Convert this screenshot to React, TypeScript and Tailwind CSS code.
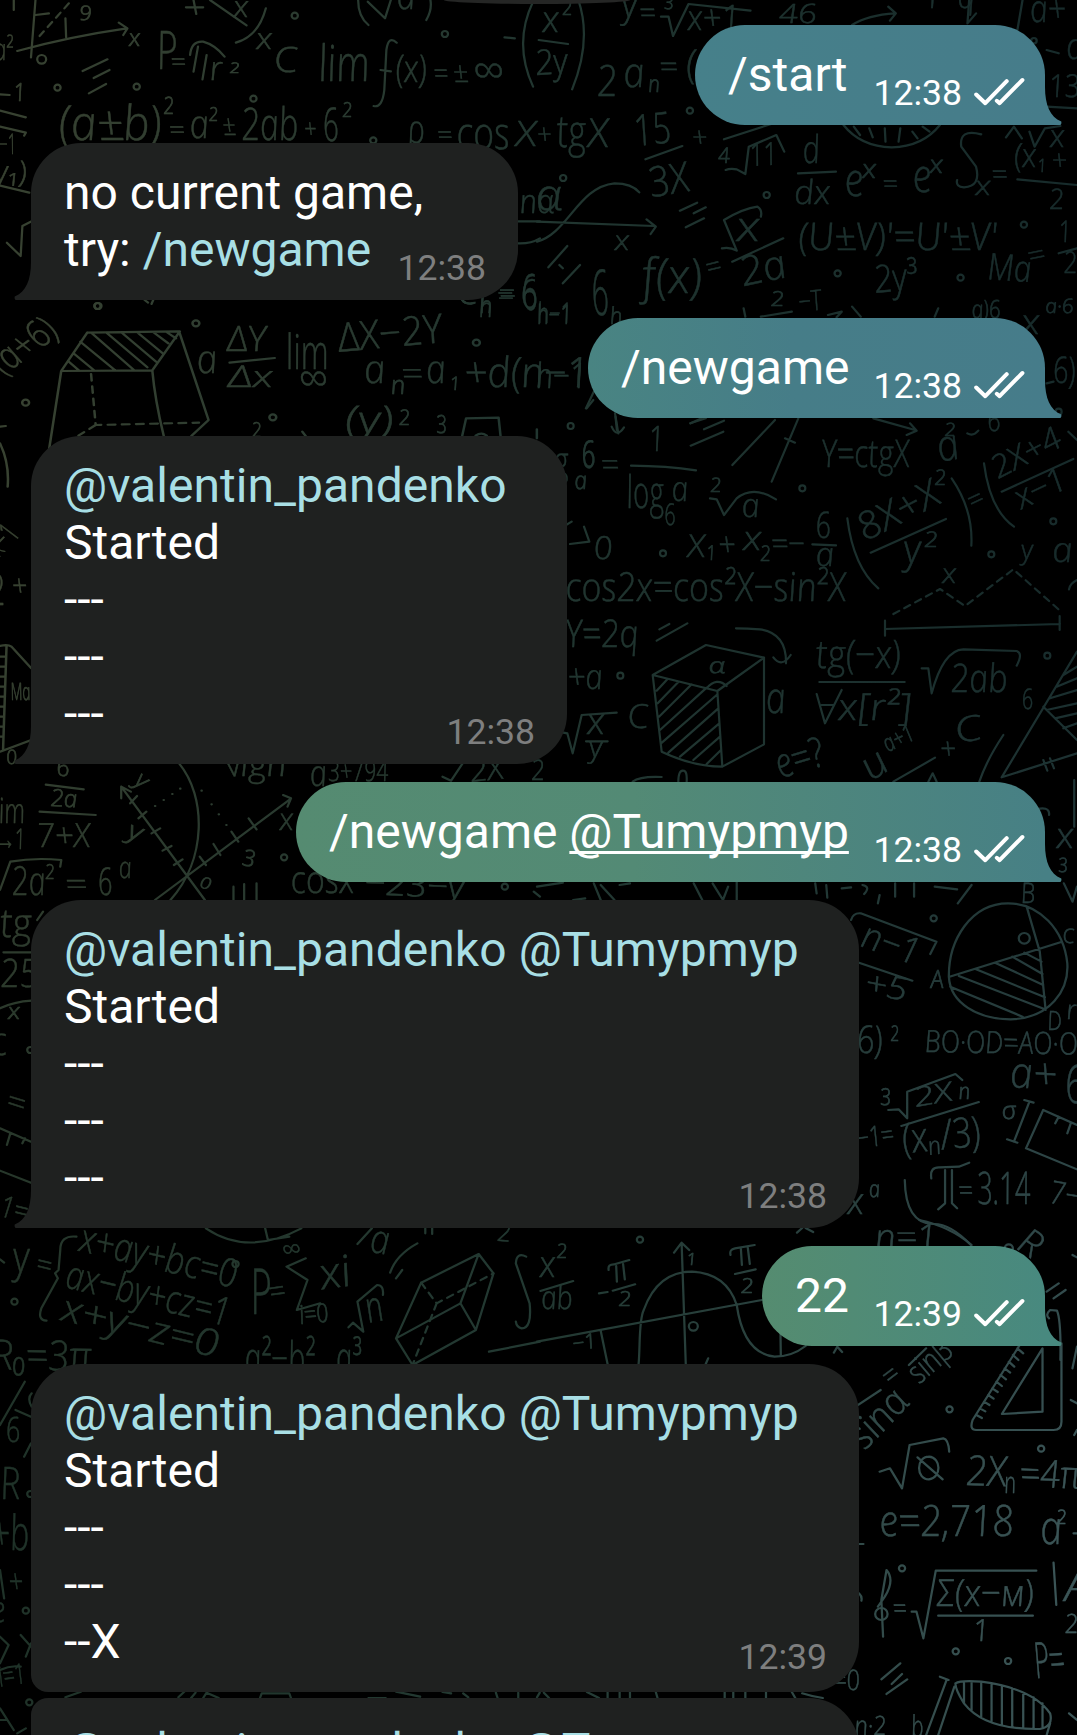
import React from "react";

/* A handwritten label: text, x, baseline y, size, width, rotation. */
type Label = [string, number, number, number, number, number?];

type Region = {
  transform: string;
  labels: Label[];
  strokes: string;
  dashes?: string;
  dots?: [number, number, number?][];
};

const regions: Region[] = [
  {
    transform: "scale(0.34436 0.33333)",
    labels: [
      ["9", 232, 60, 60, 36], ["x", 376, 138, 72, 34], ["a²", -14, 180, 90, 56],
      ["P", 460, 208, 160, 60], ["=", 498, 212, 80, 44], ["r", 612, 240, 100, 38], ["2", 668, 220, 44, 30],
      ["x", 746, 148, 90, 48], ["C", 798, 215, 105, 70], ["lim", 930, 242, 150, 148], ["(x)", 1152, 245, 115, 92],
      ["=", 1262, 248, 85, 42], ["±", 1318, 245, 85, 44], ["∞", 1378, 262, 140, 90], ["x", 680, 50, 90, 45],
      ["a", 1155, 28, 120, 55], ["1", 42, 303, 75, 34], ["−1", 0, 462, 85, 50], ["y₁)", -14, 545, 90, 96],
      ["(a±b)", 175, 420, 145, 300], ["2", 476, 342, 72, 32], ["=", 493, 418, 80, 46], ["a", 555, 415, 120, 56],
      ["2", 608, 362, 58, 28], ["±", 648, 405, 85, 38], ["2ab", 705, 420, 135, 166], ["+", 886, 415, 80, 36],
      ["6", 942, 422, 140, 46], ["2", 995, 352, 62, 30], ["ρ", 1188, 428, 120, 50], ["=", 1272, 432, 80, 44],
      ["cos", 1330, 448, 135, 155], ["X", 1500, 438, 105, 62], ["nα", 1512, 640, 100, 100], ["=", 1446, 915, 80, 48],
      ["6", 1520, 930, 150, 46], ["h", 1395, 940, 70, 36], ["C", 1330, 912, 100, 60],
    ],
    strokes:
      "M552 165Q556 122 590 125Q625 135 652 170M575 140L562 215M600 165L588 238M1152 128Q1128 105 1122 150L1116 270Q1110 325 1085 318M1105 210L1135 214M1465 112L1495 115M1548 5Q1490 130 1548 260M240 213L312 178M272 234L318 210M258 280L308 252M103 0L90 172M50 153Q200 110 368 85M345 68L370 85L358 105M103 45L142 40M190 55L192 112M40 0V30M540 22H590M562 0L570 42M610 0L716 76M772 25Q750 110 685 128M1040 0Q1040 50 1070 75M1068 5L1118 55L1135 0M1250 0Q1255 30 1238 60M0 283L28 285M0 332L75 352M0 380L75 398L70 407M0 557L85 578M20 728L60 768L65 678L92 664M1503 664H1568M1503 730Q1540 732 1568 715M420 900L430 908M445 900L440 912",
    dashes: "M200 10L115 108",
    dots: [[856, 47], [1292, 102], [167, 263], [397, 260], [736, 296], [1084, 421], [283, 918], [121, 178, 13]],
  },
  {
    transform: "translate(537 0) scale(0.34436 0.33333)",
    labels: [
      ["x", 18, 95, 110, 50], ["2", 75, 45, 65, 30], ["2y", 0, 225, 105, 95, -4], ["y", 250, 50, 110, 45],
      ["=", 300, 68, 90, 48], ["3", 370, 28, 55, 28], ["x+1", 440, 90, 105, 152], ["46", 705, 70, 80, 110],
      ["1−q", 1125, 25, 95, 150], ["a+", 1435, 65, 115, 105], ["a", 1540, 178, 110, 55], ["13", 1490, 290, 95, 90],
      ["2", 178, 288, 130, 60], ["a", 255, 262, 125, 62], ["n", 325, 275, 70, 34], ["=", 358, 232, 90, 54],
      ["(", 436, 235, 120, 30], ["+", 3, 432, 85, 42], ["tg", 62, 440, 135, 85], ["X", 150, 442, 120, 62],
      ["15", 290, 438, 130, 108, -6], ["3X", 335, 592, 125, 118, -10], ["+", 453, 442, 85, 44], ["4", 528, 490, 65, 34],
      ["11", 622, 498, 95, 80, -3], ["d", 775, 490, 116, 50], ["dx", 750, 612, 100, 105], ["e", 897, 588, 140, 56],
      ["x", 946, 535, 78, 42], ["=", 1006, 580, 80, 44], ["e", 1095, 577, 140, 56], ["x", 1142, 520, 75, 40],
      ["x", 1275, 584, 80, 46], ["=", 1323, 552, 85, 46], ["(x", 1388, 500, 100, 66], ["1", 1456, 516, 55, 24],
      ["+", 1498, 510, 85, 44], ["2", 1490, 628, 85, 44], ["x", 1492, 440, 95, 44], ["α", 0, 630, 130, 78],
      ["x", 227, 750, 82, 44], ["x", 582, 724, 125, 70], ["2a", 602, 858, 122, 135, -12], ["(U±V)'=U'±V'", 762, 750, 115, 580],
      ["1", 1518, 725, 90, 36], ["2", 1532, 820, 90, 40], ["6", 165, 945, 190, 50], ["h", 214, 972, 70, 36],
      ["h−1", 4, 968, 85, 100], ["f(x)", 310, 880, 145, 175], ["=", 500, 832, 85, 44, -14], ["2y³", 985, 878, 115, 128, -5],
      ["Ma", 1310, 838, 110, 128, 4], ["=", 1434, 798, 85, 50, -12], ["2", 680, 918, 62, 40], ["−T", 765, 935, 85, 68, -6],
      ["a)6", 1265, 955, 75, 84], ["x", 1410, 1002, 105, 54], ["a·6", 1478, 940, 60, 82], ["h−1", 0, 1165, 105, 148],
      ["6)", 1502, 1150, 110, 66],
    ],
    strokes:
      "M5 120L90 132M120 0Q160 120 102 268M360 50L382 50L395 108L440 12L620 32M915 75Q960 45 1040 40M1020 20L1042 40L1025 62M1255 0L1250 70L1275 40M1410 0L1395 90M1480 150L1515 160M1480 320L1568 325M315 478L422 438M543 418L680 372M548 510Q560 505 580 508L605 522L615 440L695 405L718 455M890 375Q940 440 1030 442Q1120 440 1170 375M920 380L938 405M965 385L975 412M1010 385L1012 425M1055 385L1050 425M1090 395L1105 415M1120 380L1140 395M758 520L868 515M1290 403Q1225 385 1232 440L1275 500Q1290 560 1240 562Q1215 560 1220 540M1395 538L1568 555M1362 412L1385 380L1408 415M1430 395L1445 440L1475 385L1520 378M0 725C90 700 120 560 225 550Q275 550 297 577M0 665L340 678M318 658L345 680L330 702M415 632L465 608M455 640L490 622M432 682L485 655M537 745Q560 740 580 752L543 660Q600 625 640 620Q655 630 650 650M567 785L715 715M1515 760L1568 745M33 802L88 738M65 795L75 805M75 850L125 795M650 950L740 935M600 925L605 950M845 945L885 935L870 952M915 920L940 950M1165 925L1155 950M165 1175L142 1225M1480 1150L1500 1145M228 1250L232 1290M445 1270L490 1255",
    dots: [[1443, 122, 8], [444, 332], [667, 585], [76, 534], [1414, 674], [873, 820], [1230, 833]],
  },
  {
    transform: "translate(0 290) scale(0.38265 0.33333)",
    labels: [
      ["(a+6)", 12, 255, 110, 195, -40], ["a", 518, 250, 120, 54], ["ΔY", 595, 182, 105, 105], ["Δx", 597, 290, 90, 120],
      ["lim", 752, 238, 145, 112], ["∞", 785, 316, 140, 76], ["ΔX−2Y", 890, 185, 120, 275, -6], ["a", 955, 278, 120, 56],
      ["n", 1024, 312, 78, 38], ["=", 1052, 284, 100, 56], ["a", 1117, 278, 120, 52], ["1", 1178, 300, 56, 26],
      ["+d(n−1", 1218, 290, 125, 325], ["C", 1198, 42, 90, 50], ["h", 1254, 80, 80, 36], ["=", 1306, 38, 85, 44],
      ["6", 1365, 55, 120, 44], ["h−1", 1406, 102, 80, 90], ["2", 660, 442, 62, 26], ["(y)", 905, 430, 115, 128],
      ["2", 1044, 406, 65, 30], ["3", 1142, 428, 75, 28], ["x−1", 0, 800, 85, 90, -50], ["2", -26, 945, 130, 44],
      ["+", 34, 918, 90, 40], ["Ma", 30, 1230, 72, 52], ["0", 18, 1422, 60, 28], ["6", 1524, 530, 110, 36],
    ],
    strokes:
      "M228 128L468 124L545 390L500 438M228 128L160 243L128 480M160 243L398 241L470 124M398 241Q405 330 428 438M180 215L205 240M192 190L245 240M210 155L300 240M240 130L350 240M280 130L385 232M320 130L408 215M360 128L425 190M400 126L440 160M435 126L460 145M600 218L718 204M1208 437L1218 385L1303 383L1308 437M1243 437Q1258 425 1272 437M1403 418V445M790 425L800 440M0 460Q25 520 20 590M0 410L15 408M0 1068Q20 1062 30 1070L82 1135M17 1070L8 1380M0 1385L82 1350M0 1100H16M0 1130H15M0 1160H14M0 1190H13M0 1220H13M0 1250H12M0 1280H11M0 1310H10M0 1340H9",
    dashes: "M238 252L250 405L520 398M250 405L205 437",
    dots: [[512, 100], [256, 48], [67, 338], [1245, 158], [713, 382]],
  },
  {
    transform: "translate(560 400) scale(0.33333)",
    labels: [
      ["1", 270, 152, 105, 46], ["log", 204, 325, 135, 112], ["6", 316, 376, 90, 34], ["a", 338, 302, 105, 50],
      ["g", -14, 225, 120, 44], ["6", 68, 205, 115, 40], ["=", 126, 227, 100, 54], ["a", 46, 268, 75, 38],
      ["2", 452, 277, 60, 34], ["a", 548, 350, 100, 54], ["Y=ctgX", 788, 200, 115, 264], ["a", 1142, 185, 130, 66, -10],
      ["2", 1155, 108, 55, 34], ["6", 1285, 92, 90, 40], ["2X+4", 1316, 236, 95, 222, -27], ["x−1", 1385, 328, 100, 160, -25],
      ["=", 1240, 332, 85, 46, -25], ["8X+X", 918, 424, 115, 262, -27], ["2", 1125, 255, 65, 36], ["y", 1035, 490, 120, 52],
      ["2", 1094, 442, 65, 42], ["0", 104, 478, 95, 56], ["X", 385, 470, 95, 54], ["1", 442, 480, 62, 28],
      ["+", 478, 468, 100, 52], ["X", 553, 450, 75, 50], ["2", 602, 484, 65, 32], ["=−", 636, 462, 90, 102],
      ["6", 770, 414, 110, 46], ["a", 770, 498, 100, 56], ["cos2x=cos²X−sin²X", 20, 604, 120, 842], ["Y=2q", 20, 742, 115, 220],
      ["α", 448, 818, 65, 50], ["a", 622, 940, 130, 60], ["tg(−x)", 772, 805, 118, 255], ["x[r²]", 838, 960, 112, 222],
      ["2ab", 1175, 875, 118, 172], ["+a", 26, 868, 105, 106], ["C", 205, 985, 100, 64], ["x", 84, 1002, 110, 54],
      ["y", 90, 1072, 85, 40], ["e=?", 664, 1135, 125, 148, -17], ["u", 936, 1142, 120, 72, -32], ["a+1", 985, 1056, 72, 94, -25],
      ["+", 1143, 1078, 90, 48], ["C", 1192, 1028, 105, 82, -8], ["x", 1148, 550, 82, 44], ["y", 1386, 478, 80, 36],
      ["a", 1480, 485, 105, 62], ["6", 1388, 926, 85, 34],
    ],
    strokes:
      "M165 40L175 100M155 80Q170 115 192 82M80 25L100 0M213 197Q320 198 408 211M392 70L425 55M432 88L492 62M392 137L490 95M645 60L517 195M715 55L635 245M675 115L705 128M450 295L470 298L492 345L530 295Q580 255 648 298M940 55L1065 90M1050 70L1070 92L1040 105M1222 100Q1240 110 1255 92M1325 275L1540 177M1272 190Q1290 330 1362 380M932 458L1158 357M862 355Q880 500 955 565M1175 235Q1240 330 1234 437M30 432L88 425L72 380M18 375L35 365M757 433L828 436M298 688L328 672M290 722L382 670M528 685Q560 685 600 688Q680 700 678 790M640 772Q665 805 692 765M278 825L438 735L612 773V1033L487 1100Q400 1100 305 1055ZM278 825L472 873L612 773M472 873L487 1100M290 872L322 838M293 910L355 846M297 950L395 853M300 990L440 863M303 1030L470 885M325 1058L475 925M360 1070L478 970M400 1080L480 1010M440 1092L483 1050M440 865Q470 830 500 858M778 846H1034M770 882L795 970L845 870M785 915H822M1085 805H1105L1115 880Q1150 750 1210 748L1370 753Q1390 760 1370 797M10 998L22 1000L38 1060L65 945L170 938M78 1024H143M1000 1145L1125 1073M1105 1145L1118 1120L1130 1145M1330 1005Q1280 1080 1258 1145M975 662V707M975 687L1500 672M1499 648V690M1551 755L1325 1132L1551 1060M1450 920L1551 1020M1510 825L1551 800M1490 860L1551 835M1470 895L1551 870M1460 930L1551 910M1485 955L1551 940M1510 985L1551 970M1450 1080L1462 1112M1470 1075L1482 1105M1525 95L1551 120M1551 540Q1530 550 1527 568M218 1145Q240 1128 305 1131M355 1145Q355 1110 370 1112Q382 1112 380 1145",
    dashes: "M1000 642L1140 567L1215 618L1360 508L1500 632",
    dots: [[32, 78], [309, 460], [727, 265], [1294, 463], [1480, 364], [1462, 767], [181, 827], [1496, 35]],
  },
  {
    transform: "translate(0 760) scale(0.34436 0.33333)",
    labels: [
      ["6", 166, 48, 75, 38], ["2a", 148, 138, 72, 78, 3], ["7+X", 110, 262, 100, 155], ["im", 0, 188, 105, 76],
      ["→1", -10, 268, 85, 86], ["2a", 38, 405, 120, 98], ["2", 133, 356, 62, 28], ["=", 192, 405, 95, 64],
      ["6", 288, 404, 115, 42], ["a", 348, 355, 90, 38], ["y", 388, 70, 70, 32, 40], ["y", 368, 232, 75, 42, 20],
      ["x", 814, 210, 92, 42], ["3", 702, 315, 68, 38, 10], ["0", 578, 380, 48, 32, 20], ["√lgn", 650, 48, 100, 185],
      ["a", 903, 78, 110, 50], ["3+794", 955, 62, 85, 175], ["2X", 1370, 65, 90, 98, -6], ["2", 1545, 60, 85, 40],
      ["cosx", 848, 400, 115, 185], ["−23−y", 1060, 402, 100, 290, 3], ["tg", 4, 532, 120, 92], ["25", 4, 680, 118, 112],
      ["x", 25, 776, 68, 36], ["c", -20, 885, 120, 44], ["=", 14, 1050, 95, 56, 18], ["1=", -2, 1368, 90, 82, 14],
    ],
    strokes:
      "M133 74L243 88M115 155L278 165M0 390L30 305Q100 292 178 300L175 320M595 420L352 80M352 115L352 80L380 95M450 420L842 118M822 105L845 115L835 140M520 10C600 110 600 300 495 420M378 130L398 108M402 175L425 155M440 220L465 205M472 272L498 258M505 315L530 298M580 290L598 315M620 252L640 285M672 215L692 245M722 175L745 208M1285 50L1310 62L1350 0M678 380V420M709 372V420M745 370V420M10 577H90M0 745Q40 725 92 722M108 480L125 455M0 1105L90 1145M20 1155L30 1120M65 1150L72 1135M0 1232L90 1268M1550 395L1568 410M450 138H451M475 120H476M500 102H501M523 86H524M585 92H586M614 133H615M635 163H636M657 195H658",
    dots: [[825, 292], [1466, 380], [88, 870]],
  },
  {
    transform: "translate(537 770) scale(0.34436 0.33333)",
    labels: [
      ["B", 1408, 400, 85, 42], ["x", 1511, 235, 108, 52], ["3", 1515, 305, 60, 28], ["n−1", 938, 528, 110, 172, 20],
      ["+5", 950, 668, 95, 125, 12], ["A", 1145, 655, 75, 38], ["C", 1528, 518, 60, 34],
      ["D", 1485, 780, 80, 42], ["r", 1540, 748, 80, 30], ["6)", 932, 848, 115, 76], ["2", 1028, 812, 65, 26],
      ["BO·OD=AO·O", 1128, 846, 92, 445, 1], ["a+", 1376, 952, 130, 136, 3], ["6", 1538, 1000, 160, 60], ["3", 998, 1005, 70, 32],
      ["2X", 1102, 1010, 80, 112, -10], ["n", 1226, 988, 68, 34], ["−1=", 935, 1135, 85, 108, -8], ["(xₙ/3)", 1068, 1150, 125, 230, -6],
      ["σ", 1352, 1048, 75, 42], ["=", 1226, 1290, 85, 42], ["3.14", 1282, 1302, 135, 155], ["7−", 1488, 1298, 95, 90, 10],
      ["x", 903, 1332, 112, 50], ["a", 966, 1280, 70, 32],
    ],
    strokes:
      "M0 350L75 338M105 390L140 385M165 340L185 390M185 345L225 390M240 345L270 340M455 340L480 390M510 340L540 390L555 350M580 336V390M808 340L812 370M840 345L843 383M885 355L912 352M945 345Q970 350 950 372M995 375L990 400M1040 340V380M1095 340V380M1155 350L1220 358M1262 345L1222 400M1530 340L1555 395L1568 350M1560 30V170M1440 120Q1490 105 1487 135M912 450Q918 428 940 430L1160 515L1142 552M935 578L1090 632M1368 400C1260 400 1195 510 1196 620C1200 700 1280 747 1375 748C1490 745 1545 660 1540 580C1530 480 1460 400 1368 400M1198 620L1520 517M1422 410L1460 545L1477 720M1200 650L1410 740M1225 618L1475 718M1275 598L1475 682M1330 578L1470 645M1380 560L1468 612M1415 548L1465 575M1020 1020L1050 1018L1075 1045V965L1215 912L1235 930M1058 1068L1283 996M1415 990L1442 998M1430 995L1385 1115M1365 1108L1395 1118M1568 1065L1470 1020L1420 1135L1568 1198M1515 1040L1505 1060M1550 1060L1540 1090M1145 1225Q1140 1190 1170 1192L1225 1190L1255 1178M1185 1200V1300L1165 1318M1205 1200V1300L1220 1315M1068 1230Q1070 1360 1150 1362Q1200 1360 1260 1425M755 1388L770 1374M780 1374L802 1386",
    dots: [[1152, 445], [1415, 505, 16]],
  },
  {
    transform: "translate(0 1220) scale(0.34436 0.33333)",
    labels: [
      ["y", 42, 155, 130, 48], ["=", 102, 160, 90, 46, 14], ["x+ay+bc=0", 228, 92, 118, 468, 14], ["ax−by+cz=1", 188, 202, 118, 488, 14],
      ["x+y−z=0", 175, 300, 112, 468, 14], ["R₀=3π", -22, 448, 125, 292, 1], ["P", 733, 282, 190, 62], ["=", 788, 248, 95, 48, -8],
      ["∞", 826, 120, 85, 54, -8], ["xi", 938, 208, 130, 92, -8], ["i=0", 874, 312, 78, 84, -5], ["a", 1074, 95, 120, 56, 10],
      ["n", 1073, 308, 130, 50, -10], ["2", 1445, 62, 80, 40, 5], ["a²−b²", 715, 462, 135, 205], ["a³", 980, 458, 130, 75],
      ["6", 20, 665, 105, 42], ["R", 5, 838, 135, 58], ["+b", -22, 990, 145, 112], ["+", 28, 1118, 100, 42],
      ["e", -24, 1205, 110, 44], ["i=1", 2, 1400, 85, 78, -8],
    ],
    strokes:
      "M598 25Q720 110 875 25M770 25L778 60L840 50M222 50Q175 45 175 90L170 150L160 160L168 175L120 265Q108 300 135 302M0 118L12 128M888 115L832 140L893 180L862 270L930 250M1038 72L1080 25M1212 70Q1150 105 1133 158M1150 175L1168 150M1012 322L1025 308L1055 335L1038 245L1095 195Q1115 195 1112 225M1223 188L1390 102L1433 160L1382 330L1198 435L1150 355ZM1390 102L1337 250L1382 330M1337 250L1150 355M1528 110Q1500 95 1498 130L1538 250Q1545 325 1515 325Q1500 322 1498 305M1420 395L1568 365M1235 25V40M1255 25V42M72 485L0 615M45 570L90 590M92 520Q78 535 92 560M70 710L90 670M0 1050L12 1135M0 1250L25 1275L0 1330M60 1245L90 1280M90 1270L75 1310M0 1350Q30 1335 60 1340M0 1465L40 1530M50 1540L75 1525M0 1500L20 1500M190 1432L235 1415M518 1432L535 1415M555 1434L568 1418M590 1434L600 1418L635 1434M755 1434L760 1420H840L845 1434M1070 1434H1120M1150 1415L1220 1430M1285 1416L1310 1420M1345 1420L1360 1432M1440 1418L1445 1434M1505 1418V1434",
    dashes: "M1223 188L1268 250L1433 160M1268 250L1198 435",
    dots: [[684, 132], [42, 245], [88, 822], [75, 1172], [85, 1447]],
  },
  {
    transform: "translate(537 1220) scale(0.34436 0.33333)",
    labels: [
      ["x", 10, 172, 112, 48], ["2", 58, 115, 60, 32], ["ab", 15, 268, 98, 92], ["2", 238, 258, 62, 38],
      ["2", 593, 218, 62, 38], ["1", 436, 135, 50, 28], ["−1", 108, 392, 62, 68, -8], ["R", 1390, 85, 110, 62, 35],
      ["n=1", 985, 88, 105, 180], ["sinα", 955, 690, 115, 195, -47], ["=", 1030, 500, 90, 44, -38], ["sinβ", 1112, 492, 95, 140, -42],
      ["2X", 1248, 795, 125, 120, 2], ["n", 1360, 820, 90, 34], ["=4π", 1404, 800, 115, 178, 2], ["e=2,718", 998, 948, 130, 390],
      ["a", 1466, 972, 140, 64], ["2", 1510, 912, 60, 30], ["=", 1036, 1195, 85, 40], ["Σ(x−м)", 1162, 1158, 112, 285],
      ["1", 1270, 1262, 92, 46], ["A", 1534, 1142, 130, 80], ["P=", 1452, 1375, 150, 88, -4], ["=0", 862, 1410, 85, 78],
      ["n·2", 925, 1545, 80, 92], ["b", 1090, 1550, 90, 36], ["2", 1535, 1240, 80, 40],
    ],
    strokes:
      "M10 213L105 183M180 220L205 216M208 150Q205 132 225 133L268 120M230 138L232 185M250 132L255 178M220 212L285 193M562 105Q558 88 575 85L632 75M592 85L595 135M612 82L618 132M575 162L635 148M432 432L420 70M398 98L420 68L442 90M0 365L653 240M295 432C300 380 295 300 310 270Q350 155 450 155Q550 160 580 255Q600 400 690 410Q740 410 780 378M185 332L205 432M707 340L708 405M490 432L497 415M862 398L872 380L886 396M1110 0Q1200 20 1262 75M1480 215L1515 190M1500 235L1535 210M1555 105L1568 112M1487 295Q1475 285 1490 270L1510 272Q1522 300 1520 420M1400 378L1265 600Q1255 630 1275 630H1500Q1523 630 1523 605V370M1468 385V575L1350 582ZM1395 385L1412 400M1382 405L1398 420M1370 425L1386 440M1358 445L1374 458M1346 465L1362 478M1334 485L1350 498M1322 505L1338 516M1310 525L1326 536M1298 545L1314 555M1286 565L1302 574M1276 585L1292 594M1568 380L1555 445M1550 540L1568 550M1568 630L1560 645M1080 435L1130 385M925 560L998 510M995 755L1025 745L1060 805L1082 675L1180 655Q1195 658 1197 695M1138 710C1100 710 1100 778 1138 778C1175 775 1175 712 1138 710M1105 712L1178 778M935 972H948M935 1120Q945 1130 942 1142M1558 940H1568M1005 1250L1000 1140L1015 1050Q1040 1080 1010 1130L990 1160M1088 1175H1102L1122 1255L1158 1052H1450M1165 1187H1440M1500 1028L1508 1155M1000 1378L1055 1330M1015 1422L1075 1378M1030 1392L1060 1362M1215 1390Q1230 1380 1290 1385Q1440 1405 1490 1480Q1500 1520 1460 1527Q1300 1530 1240 1450Q1215 1410 1215 1390M1170 1370L1195 1380M1190 1378L1130 1545M1212 1400L1165 1545M1490 1510L1480 1545M1545 1480L1568 1500M1240 1390V1448M1262 1388V1470M1290 1390V1490M1320 1392V1505M1350 1398V1515M1380 1405V1522M1412 1418V1525M1442 1432V1525M1468 1450V1520M0 1432L8 1418M20 1418L35 1434M145 1416L180 1434M205 1416V1434M240 1416V1434M270 1416V1434M345 1416L350 1434M545 1416V1434M570 1416V1434M605 1416V1434M665 1416V1434M740 1416L750 1434M770 1420Q800 1430 830 1434",
    dots: [[299, 59], [454, 319, 13], [1198, 568], [1464, 686], [1060, 1045], [1216, 1294], [1368, 1323], [1370, 85, 12], [1000, 1182, 18]],
  },
];

function Wallpaper() {
  return (
    <svg className="absolute inset-0 h-full w-full" viewBox="0 0 1077 1735" aria-hidden="true">
      <defs>
        <linearGradient id="inkTop" x1="0" x2="1" y1="0" y2="0">
          <stop offset="0" stopColor="#384231" />
          <stop offset="0.5" stopColor="#213630" />
          <stop offset="1" stopColor="#172b2b" />
        </linearGradient>
        <linearGradient id="inkBottom" x1="0" x2="1" y1="0" y2="0">
          <stop offset="0" stopColor="#1f3228" />
          <stop offset="0.5" stopColor="#233a33" />
          <stop offset="1" stopColor="#3b5557" />
        </linearGradient>
        <linearGradient id="fade" x1="0" x2="0" y1="0" y2="1">
          <stop offset="0.35" stopColor="#000" />
          <stop offset="0.85" stopColor="#fff" />
        </linearGradient>
        <mask id="lower">
          <rect width="1077" height="1735" fill="url(#fade)" />
        </mask>
        <mask id="doodles" maskUnits="userSpaceOnUse" x="0" y="0" width="1077" height="1735">
          {regions.map((r) => (
            <g
              key={r.transform}
              transform={r.transform}
              fill="none"
              stroke="#fff"
              strokeWidth="6.5"
              strokeLinecap="round"
              strokeLinejoin="round"
            >
              <path d={r.strokes} />
              {r.dashes && <path d={r.dashes} strokeDasharray="20 17" />}
              {r.dots?.map(([x, y, radius = 9]) => (
                <circle key={`${x}-${y}`} cx={x} cy={y} r={radius} />
              ))}
              {r.labels.map(([text, x, y, size, width, angle = 0], i) => (
                <text
                  key={i}
                  transform={`translate(${x} ${y}) rotate(${angle}) skewX(7)`}
                  fontSize={size}
                  textLength={width}
                  lengthAdjust="spacingAndGlyphs"
                  fill="#fff"
                  strokeWidth={size < 80 ? 2 : 1.2}
                  className="font-['Open_Sans','Noto_Sans',sans-serif] font-light italic"
                >
                  {text}
                </text>
              ))}
            </g>
          ))}
        </mask>
      </defs>
      <g mask="url(#doodles)">
        <rect width="1077" height="1735" fill="url(#inkTop)" />
        <rect width="1077" height="1735" fill="url(#inkBottom)" mask="url(#lower)" />
      </g>
    </svg>
  );
}

function Checks() {
  return (
    <svg
      className="mb-[19px] ml-3 h-[29px] w-[51px] shrink-0"
      viewBox="0 0 51 29"
      fill="none"
      stroke="white"
      strokeWidth="4"
      strokeLinecap="round"
      strokeLinejoin="round"
    >
      <path d="M2.2 17.5L11.3 26.2L32.7 4.2" />
      <path d="M22.8 23.8L25.6 26.2L48.4 3" />
    </svg>
  );
}

function Tail({ side, color }: { side: "left" | "right"; color: string }) {
  return (
    <svg
      className={
        side === "right"
          ? "absolute bottom-0 left-full -ml-px h-[38px] w-[18px]"
          : "absolute right-full bottom-0 -mr-px h-[38px] w-[18px] -scale-x-100"
      }
      viewBox="0 0 18 38"
      fill={color}
    >
      <path d="M0 0H1C1 18 6 30 17.3 34.5Q18 36 16.5 38H0Z" />
    </svg>
  );
}

function Outgoing({
  className,
  tail,
  time,
  children,
}: {
  className: string;
  tail: string;
  time: string;
  children: React.ReactNode;
}) {
  return (
    <div
      className={`relative flex h-[100px] items-end justify-between self-end rounded-l-[50px] rounded-tr-[50px] pr-5 pl-[33px] text-white ${className}`}
    >
      <p className="mb-[22px] whitespace-nowrap">{children}</p>
      <div className="flex items-end">
        <span className="mb-[11px] text-[35.6px] leading-[42px]">{time}</span>
        <Checks />
      </div>
      <Tail side="right" color={tail} />
    </div>
  );
}

function Incoming({
  className,
  time,
  timeClass = "bottom-[11px]",
  tail = true,
  children,
}: {
  className: string;
  time?: string;
  timeClass?: string;
  tail?: boolean;
  children: React.ReactNode;
}) {
  return (
    <div className={`relative self-start bg-[#1f2120] pb-[22px] pl-[33px] whitespace-nowrap text-white ${className}`}>
      {children}
      {time && (
        <span className={`absolute right-8 text-[35.6px] leading-[42px] text-[#7e7f7f] ${timeClass}`}>{time}</span>
      )}
      {tail && <Tail side="left" color="#1f2120" />}
    </div>
  );
}

function Link({ children }: { children: React.ReactNode }) {
  return <span className="text-[#a8dfe5]">{children}</span>;
}

export default function App() {
  return (
    <main className="relative h-[1735px] w-[1077px] overflow-hidden bg-black font-[Roboto,sans-serif] text-[48px] leading-[57px]">
      <Wallpaper />
      <div className="relative flex flex-col gap-[18px] pr-8 pl-[31px]">
        <div className="mb-[3px] ml-[413px] h-1 w-[186px] rounded-b-[50%_100%] bg-[#252625]" />
        <Outgoing className="w-[350px] bg-linear-to-r from-[#46808a] to-[#467c8a]" tail="#467c8a" time="12:38">
          /start
        </Outgoing>
        <Incoming className="w-[487px] rounded-t-[50px] rounded-br-[50px] pt-[21px]" time="12:38">
          <p>no current game,</p>
          <p>
            try: <Link>/newgame</Link>
          </p>
        </Incoming>
        <Outgoing
          className="w-[457px] bg-linear-to-r from-[#498482] via-[#467d88] via-45% to-[#467c8a]"
          tail="#467c8a"
          time="12:38"
        >
          /newgame
        </Outgoing>
        <Incoming className="w-[536px] rounded-t-[50px] rounded-br-[50px] pt-[21px]" time="12:38">
          <p className="tracking-[0.06px]">
            <Link>@valentin_pandenko</Link>
          </p>
          <p>Started</p>
          <p>---</p>
          <p>---</p>
          <p>---</p>
        </Incoming>
        <Outgoing
          className="w-[749px] bg-linear-to-r from-[#558b71] via-[#538a75] via-45% to-[#478085]"
          tail="#478085"
          time="12:38"
        >
          /newgame{" "}
          <span className="underline decoration-[3px] underline-offset-[3px] [text-decoration-skip-ink:none]">
            @Tumypmyp
          </span>
        </Outgoing>
        <Incoming className="w-[828px] rounded-t-[50px] rounded-br-[50px] pt-[21px]" time="12:38">
          <p className="tracking-[0.06px]">
            <Link>@valentin_pandenko</Link> <Link>@Tumypmyp</Link>
          </p>
          <p>Started</p>
          <p>---</p>
          <p>---</p>
          <p>---</p>
        </Incoming>
        <Outgoing className="w-[283px] bg-linear-to-r from-[#558c70] to-[#48897f]" tail="#48897f" time="12:39">
          22
        </Outgoing>
        <Incoming
          className="w-[828px] rounded-t-[50px] rounded-br-[50px] rounded-bl-[17px] pt-[21px]"
          time="12:39"
          timeClass="bottom-[14px]"
          tail={false}
        >
          <p className="tracking-[0.06px]">
            <Link>@valentin_pandenko</Link> <Link>@Tumypmyp</Link>
          </p>
          <p>Started</p>
          <p>---</p>
          <p>---</p>
          <p>--X</p>
        </Incoming>
        <Incoming className="-mt-3 w-[828px] rounded-tl-[17px] rounded-tr-[50px] pt-6" tail={false}>
          <p className="tracking-[0.06px]">
            <Link>@valentin_pandenko</Link> <Link>@Tumypmyp</Link>
          </p>
        </Incoming>
      </div>
    </main>
  );
}
